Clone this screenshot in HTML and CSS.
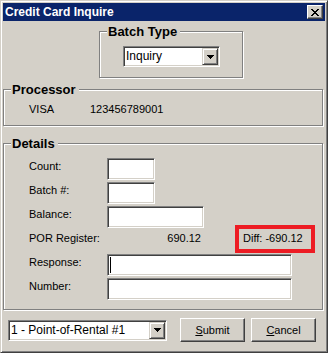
FILE: index.html
```html
<!DOCTYPE html>
<html>
<head>
    <meta charset="UTF-8">
    <title>Credit Card Inquire</title>
    <link rel="stylesheet" href="styles.css">
</head>
<body>
    <div class="window">
        <div class="titlebar">
            <span class="title">Credit Card Inquire</span>
            <span class="close-btn">
                <svg width="8" height="7" viewBox="0 0 8 7"><path d="M0 0h2v1h-2z M6 0h2v1h-2z M1 1h2v1h-2z M5 1h2v1h-2z M2 2h4v1h-4z M3 3h2v1h-2z M2 4h4v1h-4z M1 5h2v1h-2z M5 5h2v1h-2z M0 6h2v1h-2z M6 6h2v1h-2z" fill="#000"/></svg>
            </span>
        </div>
        <div class="client">
            <fieldset class="group batch">
                <legend>Batch Type</legend>
                <div class="group-body">
                    <div class="combo combo-batch">
                        <span class="combo-text">Inquiry</span>
                        <span class="combo-btn"><svg width="7" height="4" viewBox="0 0 7 4"><path d="M0 0h7v1h-7z M1 1h5v1h-5z M2 2h3v1h-3z M3 3h1v1h-1z" fill="#000"/></svg></span>
                    </div>
                </div>
            </fieldset>

            <fieldset class="group processor">
                <legend>Processor</legend>
                <div class="group-body">
                    <div class="proc-row">
                        <span class="proc-name">VISA</span>
                        <span>123456789001</span>
                    </div>
                </div>
            </fieldset>

            <fieldset class="group details">
                <legend>Details</legend>
                <div class="group-body">
                    <div class="form-row"><span class="label">Count:</span><span class="field w-sm"></span></div>
                    <div class="form-row"><span class="label">Batch #:</span><span class="field w-sm"></span></div>
                    <div class="form-row"><span class="label">Balance:</span><span class="field w-md"></span></div>
                    <div class="form-row">
                        <span class="label">POR Register:</span>
                        <span class="value">690.12</span>
                        <span class="diff">Diff: -690.12</span>
                    </div>
                    <div class="form-row"><span class="label">Response:</span><span class="field w-lg"><span class="caret"></span></span></div>
                    <div class="form-row"><span class="label">Number:</span><span class="field w-lg"></span></div>
                </div>
            </fieldset>

            <div class="actions">
                <div class="combo combo-store">
                    <span class="combo-text">1 - Point-of-Rental #1</span>
                    <span class="combo-btn"><svg width="7" height="4" viewBox="0 0 7 4"><path d="M0 0h7v1h-7z M1 1h5v1h-5z M2 2h3v1h-3z M3 3h1v1h-1z" fill="#000"/></svg></span>
                </div>
                <button type="button" class="btn"><u>S</u>ubmit</button>
                <button type="button" class="btn btn-cancel"><u>C</u>ancel</button>
            </div>
        </div>
    </div>
</body>
</html>
```

FILE: styles.css
```css
/* classic 3D window, face #D4D0C8 */
html, body {margin: 0; padding: 0; background: #D4D0C8;}

.window{
    width: 328px;
    height: 353px;
    box-sizing: border-box;
    padding: 2px;
    border: 1px solid;
    border-color: #D4D0C8 #404040 #404040 #D4D0C8;
    box-shadow: inset 1px 1px 0 #fff, inset -1px -1px 0 #808080;
    background: #D4D0C8;
    font: 11px "Liberation Sans", Arial, sans-serif;
    color: #000;
}

.titlebar{
    display: flex;
    align-items: center;
    justify-content: space-between;
    height: 18px;
    padding: 0 2px;
    background: #0A246A;
    color: #fff;
}
.title {font-weight: bold; font-size: 12px; line-height: 18px;}
.close-btn{
    display: flex;
    align-items: center;
    justify-content: center;
    width: 16px;
    height: 14px;
    box-sizing: border-box;
    background: #D4D0C8;
    border: 1px solid;
    border-color: #fff #404040 #404040 #fff;
    box-shadow: inset -1px -1px 0 #808080;
}

/* group boxes */
.group{
    margin: 0;
    padding: 0;
    min-width: 0;
    box-sizing: border-box;
    border: 1px solid #808080;
    box-shadow: inset 1px 1px 0 #fff, 1px 1px 0 #fff;
}
.group legend{
    margin-left: 7px;
    padding: 0 3px 0 1px;
    font-weight: bold;
    font-size: 13px;
    line-height: 15px;
    background: #D4D0C8;
}
.batch {width: 144px; margin: 3px 0 0 96px;}
.batch .group-body {padding: 7px 0 10px 23px;}
.processor {width: 320px; margin-top: 4px;}
.processor .group-body {padding: 4px 0 8px 25px;}
.details {width: 320px; margin-top: 10px;}
.details .group-body {padding: 7px 0 7px 25px;}

/* combo box */
.combo{
    display: flex;
    height: 21px;
    box-sizing: border-box;
    background: #fff;
    border: 1px solid;
    border-color: #808080 #fff #fff #808080;
    box-shadow: inset 1px 1px 0 #404040, inset -1px -1px 0 #D4D0C8;
    padding: 1px;
}
.combo-text{
    flex: 1;
    padding-left: 1px;
    font-size: 12px;
    line-height: 17px;
    white-space: nowrap;
}
.combo-btn{
    display: flex;
    align-items: center;
    justify-content: center;
    width: 16px;
    box-sizing: border-box;
    background: #D4D0C8;
    border: 1px solid;
    border-color: #D4D0C8 #404040 #404040 #D4D0C8;
    box-shadow: inset 1px 1px 0 #fff, inset -1px -1px 0 #808080;
}
.combo-batch {width: 97px;}
.combo-store {width: 159px; margin-right: 13px;}

.proc-row {display: flex; line-height: 16px;}
.proc-name {width: 61px;}

/* detail rows */
.form-row {display: flex; height: 24px;}
.label {width: 78px; line-height: 16px;}
.field{
    display: block;
    height: 22px;
    box-sizing: border-box;
    background: #fff;
    border: 1px solid;
    border-color: #808080 #fff #fff #808080;
    box-shadow: inset 1px 1px 0 #404040, inset -1px -1px 0 #D4D0C8;
    padding: 1px;
}
.w-sm {width: 48px;}
.w-md {width: 97px;}
.w-lg {width: 185px;}
.caret {display: block; width: 1px; height: 16px; margin: 1px 0 0 1px; background: #000;}

.value{
    width: 128px;
    box-sizing: border-box;
    padding-right: 34px;
    text-align: right;
    line-height: 16px;
}
.diff{
    width: 80px;
    height: 28px;
    box-sizing: border-box;
    margin-top: -5px;
    padding: 1px 0 0 4px;
    border: 4px solid #ED1C24;
    line-height: 16px;
    white-space: nowrap;
}

/* bottom bar */
.actions{
    display: flex;
    align-items: center;
    margin-top: 8px;
    padding-left: 5px;
}
.btn{
    width: 65px;
    height: 24px;
    margin: 0;
    padding: 0;
    box-sizing: border-box;
    font: 11px "Liberation Sans", Arial, sans-serif;
    color: #000;
    background: #D4D0C8;
    border: 1px solid;
    border-color: #fff #404040 #404040 #fff;
    box-shadow: inset -1px -1px 0 #808080;
}
.btn-cancel {margin-left: 6px;}
```
